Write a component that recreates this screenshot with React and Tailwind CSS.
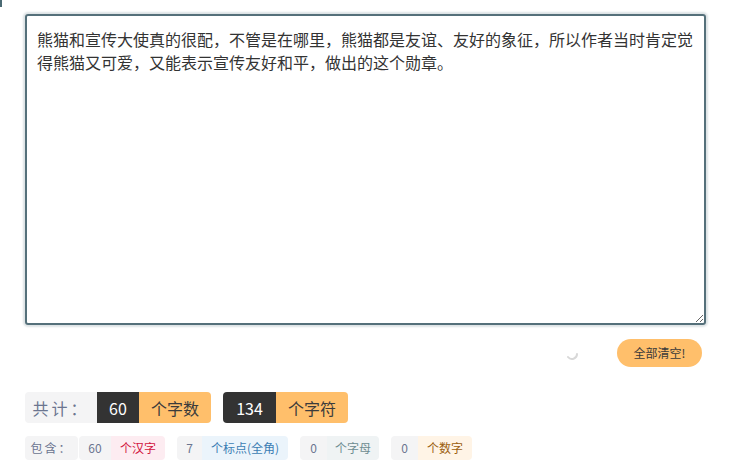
import React, { useState } from 'react';

const font = { fontFamily: '"Noto Sans CJK SC", "Noto Sans", sans-serif' };

const initial = '熊猫和宣传大使真的很配，不管是在哪里，熊猫都是友谊、友好的象征，所以作者当时肯定觉得熊猫又可爱，又能表示宣传友好和平，做出的这个勋章。';

const details = [
  { n: '60', label: '个汉字', cls: 'bg-[#fdecf1] text-[#d2143e]', w: 'w-[54px]' },
  { n: '7', label: '个标点(全角)', cls: 'bg-[#ebf4fb] text-[#3b7db3]', w: 'w-[86px]' },
  { n: '0', label: '个字母', cls: 'bg-[#eff3f4] text-[#6d8c91]', w: 'w-[52px]' },
  { n: '0', label: '个数字', cls: 'bg-[#fff4e6] text-[#9c5f10]', w: 'w-[54px]' },
];

export default function App() {
  const [text, setText] = useState(initial);

  return (
    <div className="relative w-[741px] h-[470px] bg-white overflow-hidden" style={font}>
      <div className="absolute left-0 top-0 w-[2px] h-[7px] bg-[#4b6a73]" />
      <div className="pt-[14px] pl-[25px] w-[706px]">
        <textarea
          value={text}
          onChange={e => setText(e.target.value)}
          className="block w-[681px] h-[311px] border-2 border-[#55707a] rounded-[3px] px-[10px] py-[12px] text-[16px] leading-[23px] text-[#333] outline-none resize-y shadow-[0_0_2px_2px_#dde3e5]"
          style={font}
        />

        <div className="flex items-center justify-end mt-[14px] h-[28px] pr-[4px]">
          <svg width="14" height="14" viewBox="0 0 14 14" className="mr-[38px] mt-[2px]">
            <path d="M12 7 A5 5 0 0 1 3 10" fill="none" stroke="#d8d8d8" strokeWidth="2" strokeLinecap="round" />
          </svg>
          <button className="h-[28px] w-[85px] rounded-full bg-[#ffbf6b] text-[12px] text-[#3a3a3a]">全部清空!</button>
        </div>

        <div className="flex items-stretch mt-[25px] h-[31px] text-[16px] gap-[12px]">
          <div className="flex rounded-[4px] overflow-hidden">
            <span className="w-[72px] flex items-center justify-center bg-[#f4f4f5] text-[#6b7590] tracking-[3px]">共计：</span>
            <span className="w-[42px] flex items-center justify-center bg-[#333333] text-white">60</span>
            <span className="w-[72px] flex items-center justify-center bg-[#ffbf6b] text-[#3b3b3b]">个字数</span>
          </div>
          <div className="flex rounded-[4px] overflow-hidden">
            <span className="w-[53px] flex items-center justify-center bg-[#333333] text-white">134</span>
            <span className="w-[72px] flex items-center justify-center bg-[#ffbf6b] text-[#3b3b3b]">个字符</span>
          </div>
        </div>

        <div className="flex items-stretch mt-[13px] h-[24px] text-[12px]">
          <span className="w-[53px] flex items-center justify-center bg-[#f4f4f5] text-[#6b7590] rounded-[4px] mr-[1px] tracking-[2px]">包含：</span>
          {details.map((d, i) => (
            <div key={i} className={`flex rounded-[4px] overflow-hidden ${i > 0 ? 'ml-[12px]' : ''}`}>
              <span className={`${i === 0 ? 'w-[32px]' : i === 1 ? 'w-[25px]' : 'w-[27px]'} flex items-center justify-center bg-[#f4f4f5] text-[#6b7590]`}>{d.n}</span>
              <span className={`${d.w} flex items-center justify-center ${d.cls}`}>{d.label}</span>
            </div>
          ))}
        </div>
      </div>
    </div>
  );
}
